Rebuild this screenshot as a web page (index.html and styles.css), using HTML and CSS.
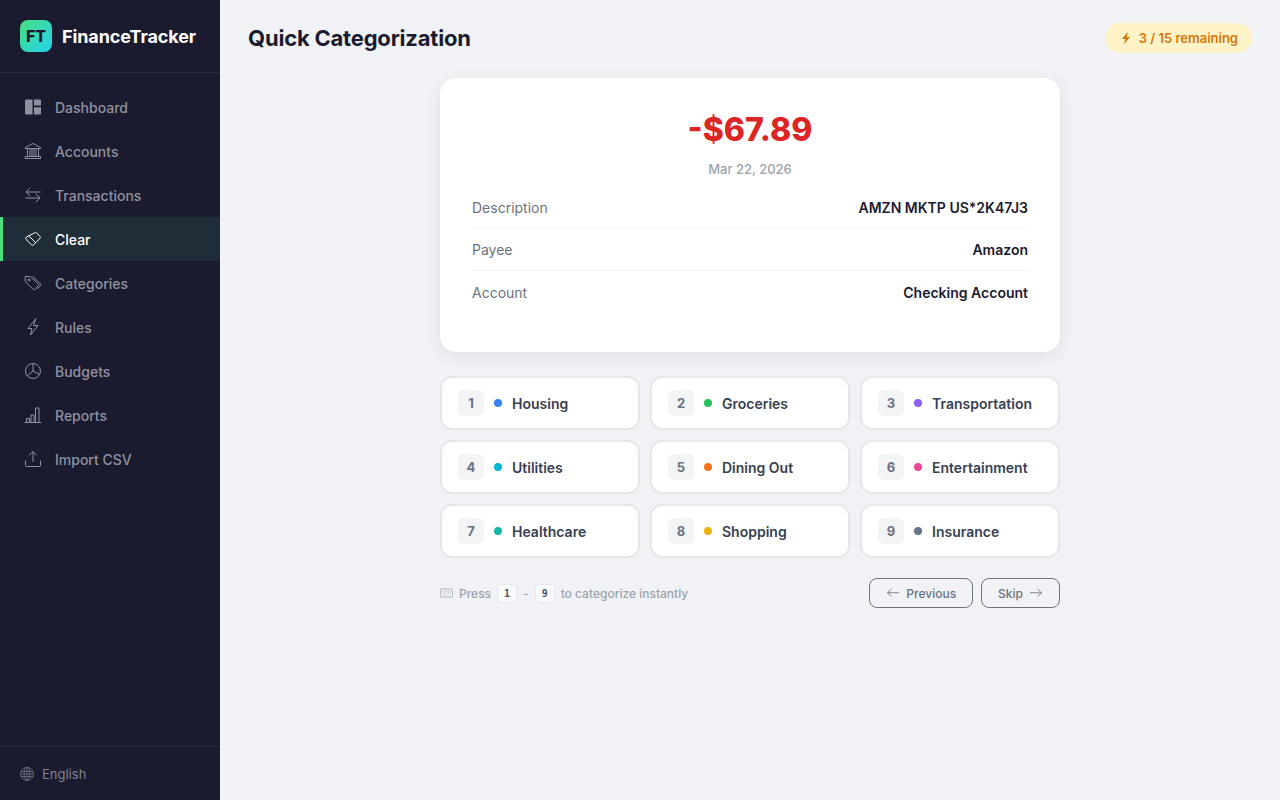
FILE: index.html
```html
<!DOCTYPE html>
<html lang="en">
<head>
    <meta charset="UTF-8">
    <meta name="viewport" content="width=device-width, initial-scale=1.0">
    <title>Quick Categorization - FinanceTracker</title>
    <link rel="stylesheet" href="styles.css">
</head>
<body>
    <div class="app">
        <aside class="sidebar">
            <div class="brand">
                <div class="brand-logo">FT</div>
                <span class="brand-name">FinanceTracker</span>
            </div>
            <nav class="nav">
                <a class="nav-item" href="#">
                    <svg class="nav-icon" viewBox="0 0 18 18"><path class="solid" d="M2 1.5h6a.5.5 0 0 1 .5.5v14a.5.5 0 0 1-.5.5H2a1 1 0 0 1-1-1V2.500a1 1 0 0 1 1-1zM10 1.500h6a1 1 0 0 1 1 1V7.500h-7zM10 9.200h7v6.300a1 1 0 0 1-1 1h-6z"/></svg>
                    Dashboard
                </a>
                <a class="nav-item" href="#">
                    <svg class="nav-icon" viewBox="0 0 18 18"><path d="M1.500 5.500 9 1.500l7.500 4v1h-15zM3 6.500h12M1.500 16.500h15M1.500 14.500h15v2h-15zM3.500 6.500v8M6 6.500v8M8 6.500v8M10 6.500v8M12 6.500v8M14.500 6.500v8"/></svg>
                    Accounts
                </a>
                <a class="nav-item" href="#">
                    <svg class="nav-icon" viewBox="0 0 18 18"><path d="M16 6.500H2.500M6 2.500l-4 4 4 4M2 12.500h13.500M12 8.500l4 4-4 4" transform="translate(0 -.5)"/></svg>
                    Transactions
                </a>
                <a class="nav-item active" href="#">
                    <svg class="nav-icon" viewBox="0 0 18 18"><path d="M10.500 2.800a1.500 1.500 0 0 1 2.100 0l3.300 3.600a1.500 1.500 0 0 1 0 2.100l-6.400 6.300a1.500 1.500 0 0 1-2.100 0l-4.900-4.900.1-.1-.4-.4a1.500 1.500 0 0 1 0-2.100zM5.500 6.500l6 6"/></svg>
                    Clear
                </a>
                <a class="nav-item" href="#">
                    <svg class="nav-icon" viewBox="0 0 18 18"><path d="M1.500 2.500h5.200l7.800 7.800a1 1 0 0 1 0 1.400l-3.800 3.800a1 1 0 0 1-1.400 0L1.500 7.700zM9 2.500l7.500 7.500a1 1 0 0 1 0 1.400l-3.500 3.500"/><circle cx="5" cy="6" r="1"/></svg>
                    Categories
                </a>
                <a class="nav-item" href="#">
                    <svg class="nav-icon" viewBox="0 0 18 18"><path d="M11.500 1 4 10.500h4L6.500 17 14 7.500h-4z"/></svg>
                    Rules
                </a>
                <a class="nav-item" href="#">
                    <svg class="nav-icon" viewBox="0 0 18 18"><circle cx="9" cy="9" r="7.500"/><path d="M9 1.500V9l6.500 3.500M9 9l-5.500 4.500"/></svg>
                    Budgets
                </a>
                <a class="nav-item" href="#">
                    <svg class="nav-icon" viewBox="0 0 18 18"><path d="M1 16.500h16M2.500 16.500v-4h3v4M7 16.500V9h3v7.500M11.500 16.500V2h3.500v14.500"/></svg>
                    Reports
                </a>
                <a class="nav-item" href="#">
                    <svg class="nav-icon" viewBox="0 0 18 18"><path d="M9 11.500V2M5.500 5 9 1.500 12.500 5M1.500 11v4.500a1 1 0 0 0 1 1h13a1 1 0 0 0 1-1V11"/></svg>
                    Import CSV
                </a>
            </nav>
            <div class="sidebar-footer">
                <svg class="globe" viewBox="0 0 14 14"><circle cx="7" cy="7" r="6.500"/><ellipse cx="7" cy="7" rx="3" ry="6.500"/><path d="M7 .5v13M1 4.500h12M.5 7h13M1 9.500h12"/></svg>
                English
            </div>
        </aside>

        <main class="main">
            <header class="page-header">
                <h1>Quick Categorization</h1>
                <div class="remaining">
                    <svg viewBox="0 0 14 14"><path d="M8.700.8 3 8h3.200L5 13.200 11 6H7.800z"/></svg>
                    3 / 15 remaining
                </div>
            </header>

            <div class="content">
                <section class="txn-card">
                    <div class="amount">-$67.89</div>
                    <div class="date">Mar 22, 2026</div>
                    <div class="details">
                        <div class="detail-row"><span class="detail-label">Description</span><span class="detail-value">AMZN MKTP US*2K47J3</span></div>
                        <div class="detail-row"><span class="detail-label">Payee</span><span class="detail-value">Amazon</span></div>
                        <div class="detail-row"><span class="detail-label">Account</span><span class="detail-value">Checking Account</span></div>
                    </div>
                </section>

                <section class="category-grid">
                    <button class="category"><span class="key">1</span><span class="dot dot-housing"></span>Housing</button>
                    <button class="category"><span class="key">2</span><span class="dot dot-groceries"></span>Groceries</button>
                    <button class="category"><span class="key">3</span><span class="dot dot-transportation"></span>Transportation</button>
                    <button class="category"><span class="key">4</span><span class="dot dot-utilities"></span>Utilities</button>
                    <button class="category"><span class="key">5</span><span class="dot dot-dining"></span>Dining Out</button>
                    <button class="category"><span class="key">6</span><span class="dot dot-entertainment"></span>Entertainment</button>
                    <button class="category"><span class="key">7</span><span class="dot dot-healthcare"></span>Healthcare</button>
                    <button class="category"><span class="key">8</span><span class="dot dot-shopping"></span>Shopping</button>
                    <button class="category"><span class="key">9</span><span class="dot dot-insurance"></span>Insurance</button>
                </section>

                <div class="actions">
                    <div class="hint">
                        <svg class="keyboard" viewBox="0 0 14 14"><rect x=".5" y="2.500" width="13" height="9" rx="1"/><path d="M2.500 5h9M2.500 7h9M4 9.200h6" stroke-dasharray="1 1"/></svg>
                        <span>Press</span>
                        <kbd>1</kbd>
                        <span>-</span>
                        <kbd>9</kbd>
                        <span>to categorize instantly</span>
                    </div>
                    <div class="nav-buttons">
                        <button class="btn"><svg viewBox="0 0 14 14"><path d="M13 7H1.500M5.500 3l-4 4 4 4" transform="scale(1 .9) translate(0 .5)"/></svg>Previous</button>
                        <button class="btn"><span>Skip</span><svg viewBox="0 0 14 14"><path d="M1 7h11.500M8.500 3l4 4-4 4" transform="scale(1 .9) translate(0 .5)"/></svg></button>
                    </div>
                </div>
            </div>
        </main>
    </div>
</body>
</html>
```

FILE: styles.css
```css
* {
    box-sizing: border-box;
}
body {
    font-family: Inter, "Liberation Sans", sans-serif;
    background-color: #f0f2f5;
    margin: 0;
    padding: 0;
}
.app {
    display: flex;
    height: 800px;
    overflow: hidden;
}
.sidebar {
    width: 220px;
    flex-shrink: 0;
    display: flex;
    flex-direction: column;
    background-color: #1a1b2e;
}
.brand {
    display: flex;
    align-items: center;
    gap: 10px;
    height: 73px;
    padding: 0 20px;
    border-bottom: 1px solid #2a2b3d;
}
.brand-logo {
    width: 32px;
    height: 32px;
    border-radius: 8px;
    display: flex;
    align-items: center;
    justify-content: center;
    background: linear-gradient(135deg, #4ade80, #22d3ee);
    color: #1a1b2e;
    font-size: 16px;
    font-weight: 800;
}
.brand-name {
    color: #ffffff;
    font-size: 18px;
    font-weight: 700;
    letter-spacing: -0.1px;
}
.nav {
    flex: 1;
    padding-top: 12px;
}
.nav-item {
    display: flex;
    align-items: center;
    gap: 13px;
    height: 44px;
    padding-left: 21px;
    border-left: 3px solid transparent;
    color: #9091a0;
    font-size: 14px;
    font-weight: 500;
    text-decoration: none;
}
.nav-item.active {
    background-color: #1f2d38;
    border-left-color: #4ade80;
    color: #ffffff;
}
.nav-icon {
    width: 18px;
    height: 18px;
    fill: none;
    stroke: currentColor;
    stroke-width: 1;
    stroke-linejoin: round;
    stroke-linecap: round;
}
.nav-icon .solid {
    fill: currentColor;
    stroke: none;
}
.sidebar-footer {
    display: flex;
    align-items: center;
    gap: 8px;
    height: 54px;
    padding: 0 20px;
    border-top: 1px solid #2a2b3d;
    color: #80818f;
    font-size: 13px;
}
.globe {
    width: 14px;
    height: 14px;
    fill: none;
    stroke: currentColor;
    stroke-width: .7;
}
.main {
    flex: 1;
    padding: 0 28px;
}
.page-header {
    display: flex;
    align-items: center;
    justify-content: space-between;
    height: 78px;
    padding-bottom: 2px;
}
.page-header h1 {
    margin: 0;
    color: #1a1b2e;
    font-size: 22px;
    font-weight: 700;
    letter-spacing: -0.2px;
}
.remaining {
    display: flex;
    align-items: center;
    gap: 6px;
    height: 30px;
    padding: 0 14px;
    border-radius: 15px;
    background-color: #fef3c7;
    color: #d97706;
    font-size: 13px;
    font-weight: 600;
}
.remaining svg {
    width: 14px;
    height: 14px;
    fill: currentColor;
}
.content {
    width: 620px;
    margin: 0 auto;
}
.txn-card {
    height: 274px;
    padding: 32px;
    background-color: #ffffff;
    border-radius: 16px;
    box-shadow: 0 4px 16px rgba(0, 0, 0, 0.08);
    text-align: center;
}
.amount {
    color: #dc2626;
    font-size: 32px;
    font-weight: 800;
    line-height: 40px;
}
.date {
    margin-top: 9px;
    color: #9ca3af;
    font-size: 13px;
    font-weight: 500;
    line-height: 20px;
}
.details {
    margin-top: 8px;
}
.detail-row {
    display: flex;
    justify-content: space-between;
    align-items: center;
    height: 42px;
    font-size: 14px;
    border-bottom: 1px solid #f3f4f6;
}
.detail-row:last-child {
    border-bottom: none;
}
.detail-label {
    color: #6b7280;
}
.detail-value {
    color: #1a1b2e;
    font-weight: 600;
}
.category-grid {
    display: grid;
    grid-template-columns: repeat(3, 1fr);
    gap: 10px;
    margin-top: 24px;
}
.category {
    display: flex;
    align-items: center;
    height: 54px;
    padding: 0 16px;
    background-color: #ffffff;
    border: 2px solid #e5e7eb;
    border-radius: 12px;
    color: #374151;
    font-family: inherit;
    font-size: 14px;
    font-weight: 600;
}
.key {
    width: 26px;
    height: 26px;
    margin-right: 10px;
    display: flex;
    align-items: center;
    justify-content: center;
    background-color: #f3f4f6;
    border-radius: 6px;
    color: #6b7280;
    font-size: 13px;
    font-weight: 700;
}
.dot {
    width: 8px;
    height: 8px;
    margin-right: 10px;
    border-radius: 50%;
}
.dot-housing { background-color: #3b82f6; }
.dot-groceries { background-color: #22c55e; }
.dot-transportation { background-color: #8b5cf6; }
.dot-utilities { background-color: #06b6d4; }
.dot-dining { background-color: #f97316; }
.dot-entertainment { background-color: #ec4899; }
.dot-healthcare { background-color: #14b8a6; }
.dot-shopping { background-color: #eab308; }
.dot-insurance { background-color: #64748b; }
.actions {
    display: flex;
    align-items: center;
    justify-content: space-between;
    margin-top: 20px;
}
.hint {
    display: flex;
    align-items: center;
    gap: 6px;
    color: #9ca3af;
    font-size: 12px;
    font-weight: 500;
}
.keyboard {
    width: 13px;
    height: 14px;
    fill: none;
    stroke: currentColor;
    stroke-width: .8;
}
kbd {
    min-width: 20px;
    height: 19px;
    display: flex;
    align-items: center;
    justify-content: center;
    background-color: #f9fafb;
    border: 1px solid #e5e7eb;
    border-radius: 4px;
    color: #4b5563;
    font-family: "DejaVu Sans Mono", monospace;
    font-size: 10px;
    font-weight: 700;
}
.nav-buttons {
    display: flex;
    gap: 8px;
}
.btn {
    display: flex;
    align-items: center;
    gap: 6px;
    height: 30px;
    padding: 0 16px;
    background: transparent;
    border: 1px solid #6b7280;
    border-radius: 8px;
    color: #6b7280;
    font-family: inherit;
    font-size: 12px;
    font-weight: 500;
}
.btn svg {
    width: 14px;
    height: 14px;
    fill: none;
    stroke: currentColor;
    stroke-width: .9;
}
```
